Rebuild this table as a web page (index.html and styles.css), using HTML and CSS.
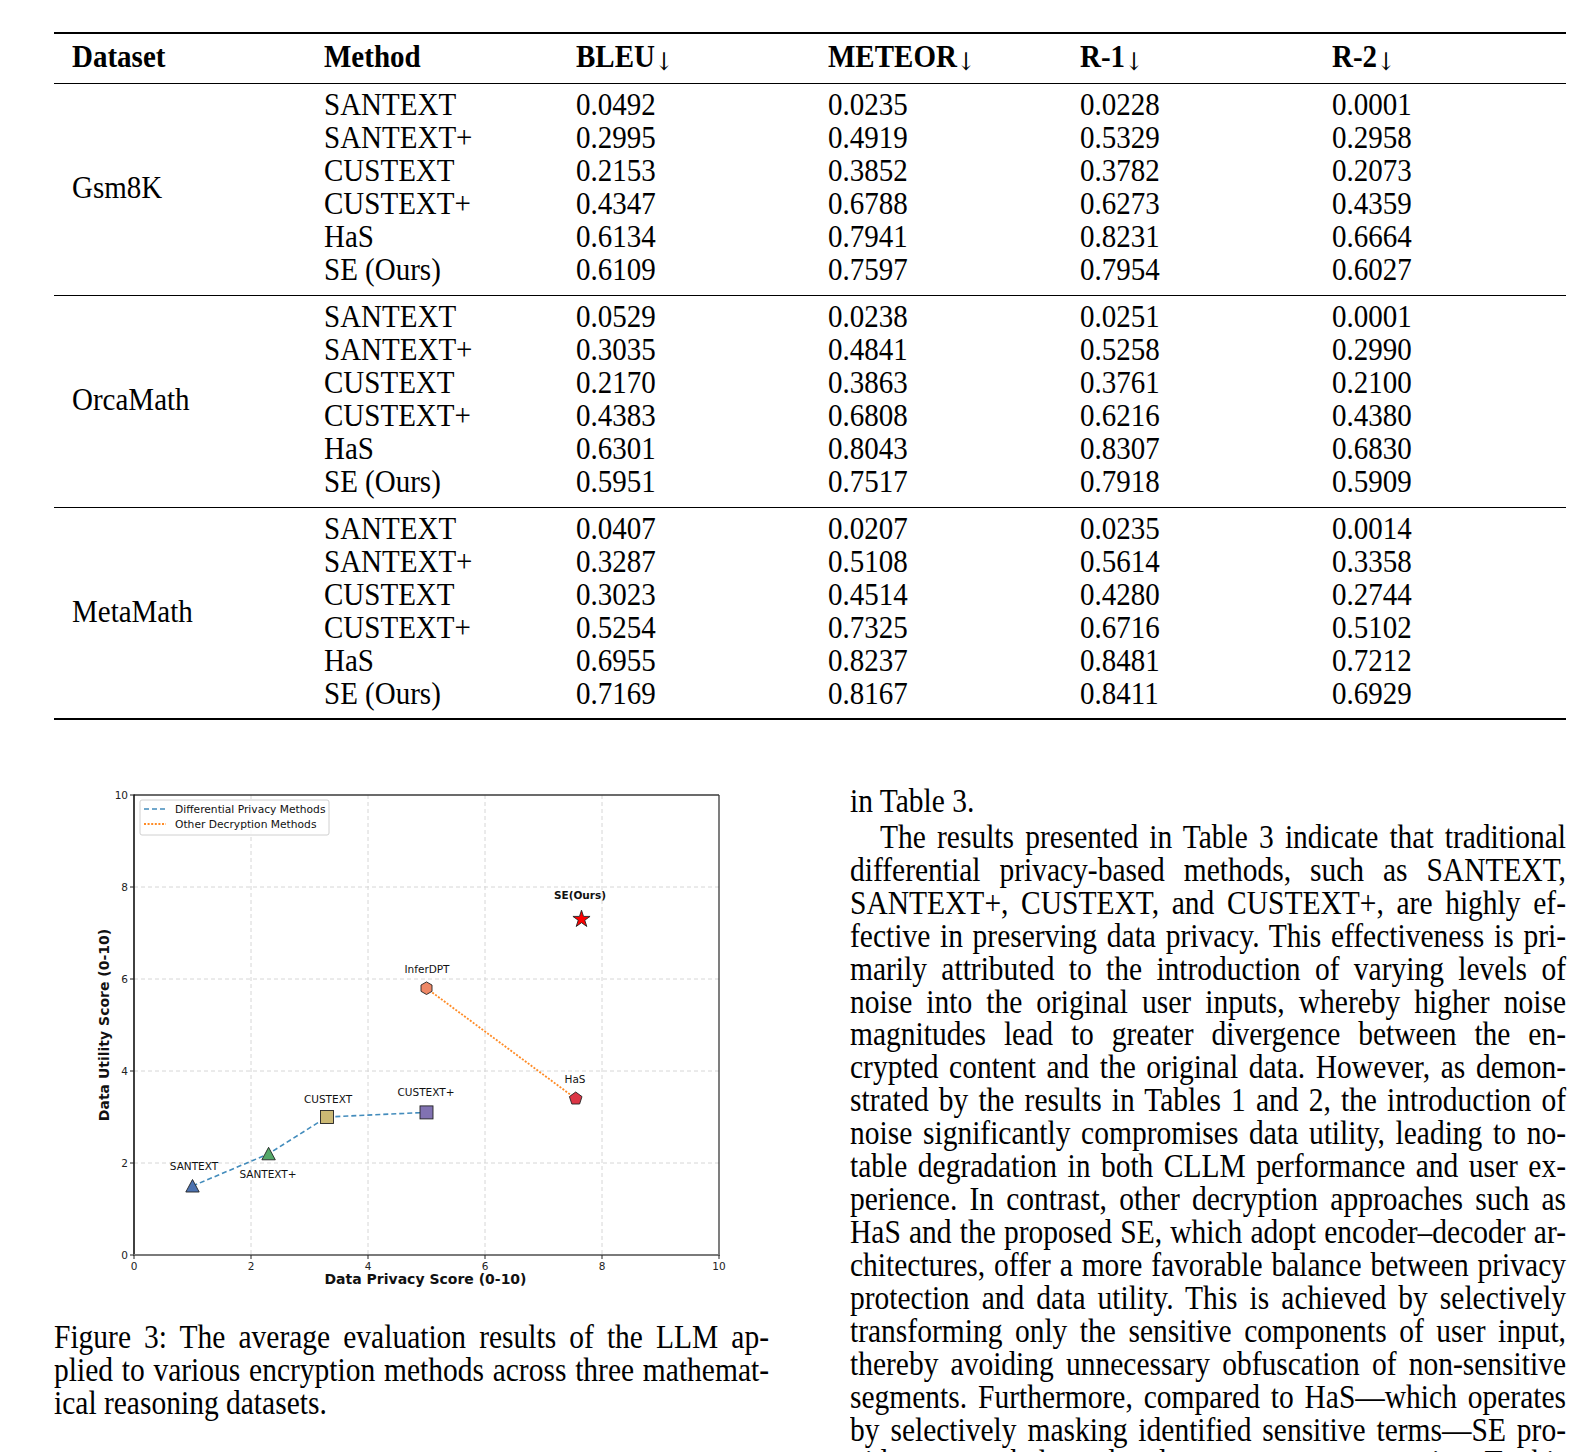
FILE: index.html
```html
<!DOCTYPE html>
<html>
<head>
<meta charset="utf-8">
<link rel="stylesheet" href="styles.css">
</head>
<body>
<div class="page">
  <div class="table">
    <div class="thead">
      <div>Dataset</div><div>Method</div><div>BLEU<span class="arr">↓</span></div><div>METEOR<span class="arr">↓</span></div><div>R-1<span class="arr">↓</span></div><div>R-2<span class="arr">↓</span></div>
    </div>
    <div class="group">
      <div class="ds">Gsm8K</div>
      <div>SANTEXT</div><div>0.0492</div><div>0.0235</div><div>0.0228</div><div>0.0001</div>
      <div>SANTEXT+</div><div>0.2995</div><div>0.4919</div><div>0.5329</div><div>0.2958</div>
      <div>CUSTEXT</div><div>0.2153</div><div>0.3852</div><div>0.3782</div><div>0.2073</div>
      <div>CUSTEXT+</div><div>0.4347</div><div>0.6788</div><div>0.6273</div><div>0.4359</div>
      <div>HaS</div><div>0.6134</div><div>0.7941</div><div>0.8231</div><div>0.6664</div>
      <div>SE (Ours)</div><div>0.6109</div><div>0.7597</div><div>0.7954</div><div>0.6027</div>
    </div>
    <div class="group">
      <div class="ds">OrcaMath</div>
      <div>SANTEXT</div><div>0.0529</div><div>0.0238</div><div>0.0251</div><div>0.0001</div>
      <div>SANTEXT+</div><div>0.3035</div><div>0.4841</div><div>0.5258</div><div>0.2990</div>
      <div>CUSTEXT</div><div>0.2170</div><div>0.3863</div><div>0.3761</div><div>0.2100</div>
      <div>CUSTEXT+</div><div>0.4383</div><div>0.6808</div><div>0.6216</div><div>0.4380</div>
      <div>HaS</div><div>0.6301</div><div>0.8043</div><div>0.8307</div><div>0.6830</div>
      <div>SE (Ours)</div><div>0.5951</div><div>0.7517</div><div>0.7918</div><div>0.5909</div>
    </div>
    <div class="group last">
      <div class="ds">MetaMath</div>
      <div>SANTEXT</div><div>0.0407</div><div>0.0207</div><div>0.0235</div><div>0.0014</div>
      <div>SANTEXT+</div><div>0.3287</div><div>0.5108</div><div>0.5614</div><div>0.3358</div>
      <div>CUSTEXT</div><div>0.3023</div><div>0.4514</div><div>0.4280</div><div>0.2744</div>
      <div>CUSTEXT+</div><div>0.5254</div><div>0.7325</div><div>0.6716</div><div>0.5102</div>
      <div>HaS</div><div>0.6955</div><div>0.8237</div><div>0.8481</div><div>0.7212</div>
      <div>SE (Ours)</div><div>0.7169</div><div>0.8167</div><div>0.8411</div><div>0.6929</div>
    </div>
  </div>

  <div class="cols">
    <div class="left">
      <svg class="chart" width="715" height="520" viewBox="0 0 715 520">
        <g class="grid">
          <line x1="197" y1="13" x2="197" y2="473"/>
          <line x1="314" y1="13" x2="314" y2="473"/>
          <line x1="431" y1="13" x2="431" y2="473"/>
          <line x1="548" y1="13" x2="548" y2="473"/>
          <line x1="80" y1="381" x2="665" y2="381"/>
          <line x1="80" y1="289" x2="665" y2="289"/>
          <line x1="80" y1="197" x2="665" y2="197"/>
          <line x1="80" y1="105" x2="665" y2="105"/>
        </g>
        <line x1="80" y1="13" x2="665" y2="13" class="sp-top"/>
        <line x1="665" y1="13" x2="665" y2="473" class="sp-top"/>
        <line x1="80" y1="12.5" x2="80" y2="474" class="sp-left"/>
        <line x1="79" y1="473" x2="666" y2="473" class="sp-bottom"/>
        <g class="tick">
          <line x1="80" y1="473" x2="80" y2="477"/>
          <line x1="197" y1="473" x2="197" y2="477"/>
          <line x1="314" y1="473" x2="314" y2="477"/>
          <line x1="431" y1="473" x2="431" y2="477"/>
          <line x1="548" y1="473" x2="548" y2="477"/>
          <line x1="665" y1="473" x2="665" y2="477"/>
          <line x1="76" y1="473" x2="80" y2="473"/>
          <line x1="76" y1="381" x2="80" y2="381"/>
          <line x1="76" y1="289" x2="80" y2="289"/>
          <line x1="76" y1="197" x2="80" y2="197"/>
          <line x1="76" y1="105" x2="80" y2="105"/>
          <line x1="76" y1="13" x2="80" y2="13"/>
        </g>
        <g class="ticklab xt">
          <text x="80" y="488">0</text>
          <text x="197" y="488">2</text>
          <text x="314" y="488">4</text>
          <text x="431" y="488">6</text>
          <text x="548" y="488">8</text>
          <text x="665" y="488">10</text>
        </g>
        <g class="ticklab yt">
          <text x="74" y="476.8">0</text>
          <text x="74" y="384.8">2</text>
          <text x="74" y="292.8">4</text>
          <text x="74" y="200.8">6</text>
          <text x="74" y="108.8">8</text>
          <text x="74" y="16.8">10</text>
        </g>
        <text class="axlab" x="371.5" y="502">Data Privacy Score (0-10)</text>
        <text class="axlab" transform="translate(55 243) rotate(-90)" x="0" y="0">Data Utility Score (0-10)</text>

        <polyline class="dp" points="138.5,404 214.6,371.8 273,335 372.5,330.4"/>
        <line class="od" x1="372.5" y1="206.2" x2="521.7" y2="316.6"/>

        <polygon class="mk" fill="#4c72b0" points="138.5,397.5 131.8,410 145.2,410"/>
        <polygon class="mk" fill="#55a868" points="214.6,365.3 207.9,377.8 221.3,377.8"/>
        <rect class="mk" fill="#ccb974" x="266.5" y="328.5" width="13" height="13"/>
        <rect class="mk" fill="#8172b2" x="366" y="323.9" width="13" height="13"/>
        <polygon class="mk" fill="#ee8866" points="372.5,199.9 367,203.05 367,209.35 372.5,212.5 378,209.35 378,203.05"/>
        <polygon class="mk" fill="#dc3545" points="521.7,310 528,314.6 525.6,322 517.8,322 515.4,314.6"/>
        <polygon class="mk" fill="#ff0000" points="527.5,128.2 529.53,134.41 536.06,134.42 530.78,138.27 532.79,144.48 527.5,140.65 522.21,144.48 524.22,138.27 518.94,134.42 525.47,134.41"/>

        <g class="lab">
          <text x="140" y="388">SANTEXT</text>
          <text x="214" y="396">SANTEXT+</text>
          <text x="274" y="321">CUSTEXT</text>
          <text x="372" y="314">CUSTEXT+</text>
          <text x="521" y="301">HaS</text>
          <text x="373" y="191">InferDPT</text>
          <text x="526" y="117" class="bold">SE(Ours)</text>
        </g>

        <rect class="legbox" x="86" y="18" width="189" height="35" rx="2"/>
        <line class="dp" x1="90" y1="27" x2="112" y2="27"/>
        <line class="od" x1="90" y1="42" x2="112" y2="42"/>
        <text class="legtxt" x="121" y="30.5">Differential Privacy Methods</text>
        <text class="legtxt" x="121" y="46">Other Decryption Methods</text>
      </svg>
      <p class="caption">
        <span class="j">Figure 3: The average evaluation results of the LLM ap-</span>
        <span class="j">plied to various encryption methods across three mathemat-</span>
        <span>ical reasoning datasets.</span>
      </p>
    </div>
    <div class="right">
      <p class="para">
        <span class="first">in Table 3.</span>
        <span class="j indent">The results presented in Table 3 indicate that traditional</span>
        <span class="j">differential privacy-based methods, such as SANTEXT,</span>
        <span class="j">SANTEXT+, CUSTEXT, and CUSTEXT+, are highly ef-</span>
        <span class="j">fective in preserving data privacy. This effectiveness is pri-</span>
        <span class="j">marily attributed to the introduction of varying levels of</span>
        <span class="j">noise into the original user inputs, whereby higher noise</span>
        <span class="j">magnitudes lead to greater divergence between the en-</span>
        <span class="j">crypted content and the original data. However, as demon-</span>
        <span class="j">strated by the results in Tables 1 and 2, the introduction of</span>
        <span class="j">noise significantly compromises data utility, leading to no-</span>
        <span class="j">table degradation in both CLLM performance and user ex-</span>
        <span class="j">perience. In contrast, other decryption approaches such as</span>
        <span class="j">HaS and the proposed SE, which adopt encoder–decoder ar-</span>
        <span class="j">chitectures, offer a more favorable balance between privacy</span>
        <span class="j">protection and data utility. This is achieved by selectively</span>
        <span class="j">transforming only the sensitive components of user input,</span>
        <span class="j">thereby avoiding unnecessary obfuscation of non-sensitive</span>
        <span class="j">segments. Furthermore, compared to HaS—which operates</span>
        <span class="j">by selectively masking identified sensitive terms—SE pro-</span>
        <span class="j">vides a more balanced and context-aware protection. To this</span>
      </p>
    </div>
  </div>
</div>
</body>
</html>
```

FILE: styles.css
```css
html, body {
  margin: 0;
  padding: 0;
  background: #ffffff;
}
body {
  color: #000;
  font-family: "Liberation Serif", "Times New Roman", serif;
  height: 1452px;
  overflow: hidden;
}
.page {
  padding: 32px 0 0 54px;
  width: 1512px;
}
.table {
  width: 1512px;
  border-top: 2px solid #000;
  border-bottom: 2px solid #000;
  font-size: 29px;
}
.thead,
.group {
  display: grid;
  grid-template-columns: 252px 252px 252px 252px 252px 1fr;
  padding-left: 18px;
}
.thead > div,
.group > div {
  transform: scaleY(1.12);
}
.thead {
  font-weight: bold;
  line-height: 44px;
  padding-bottom: 2px;
  border-bottom: 1px solid #000;
}
.arr {
  font-weight: normal;
  font-family: "DejaVu Serif", "Liberation Serif", serif;
  font-size: 22px;
  position: relative;
  top: 3px;
}
.group {
  line-height: 33px;
  padding-top: 4px;
  padding-bottom: 9px;
  border-bottom: 1px solid #000;
}
.group.last {
  padding-bottom: 8px;
  border-bottom: none;
}
.ds {
  grid-column: 1;
  grid-row: 1 / span 6;
  align-self: center;
}
.cols {
  display: grid;
  grid-template-columns: 715px 716px;
  column-gap: 81px;
  margin-top: 62px;
}
.chart {
  display: block;
}
.grid line {
  stroke: #d6d6d6;
  stroke-width: 1;
  stroke-dasharray: 4 3;
}
.sp-top {
  stroke: #3a3a3a;
  stroke-width: 1.3;
}
.sp-left {
  stroke: #111;
  stroke-width: 1.6;
}
.sp-bottom {
  stroke: #7a7a7a;
  stroke-width: 2.2;
}
.tick line {
  stroke: #222;
  stroke-width: 1;
}
.ticklab text {
  font-family: "DejaVu Sans", sans-serif;
  font-size: 10.5px;
  fill: #222;
}
.xt text {
  text-anchor: middle;
}
.yt text {
  text-anchor: end;
}
.axlab {
  font-family: "DejaVu Sans", sans-serif;
  font-weight: bold;
  font-size: 14px;
  text-anchor: middle;
  fill: #111;
}
.dp {
  fill: none;
  stroke: #2f7fb5;
  stroke-width: 1.6;
  stroke-dasharray: 5 3;
  opacity: 0.9;
}
.od {
  stroke: #ff7f0e;
  stroke-width: 1.8;
  stroke-dasharray: 2 1.6;
  opacity: 0.9;
}
.mk {
  stroke: #222;
  stroke-width: 0.9;
}
.lab text {
  font-family: "DejaVu Sans", sans-serif;
  font-size: 10.5px;
  text-anchor: middle;
  fill: #111;
}
.lab text.bold {
  font-weight: bold;
}
.legbox {
  fill: #fff;
  fill-opacity: 0.85;
  stroke: #d0d0d0;
  stroke-width: 1;
}
.legtxt {
  font-family: "DejaVu Sans", sans-serif;
  font-size: 10.7px;
  fill: #111;
}
.caption {
  margin: 19px 0 0;
  font-size: 29.5px;
  line-height: 33px;
}
.caption span,
.para span {
  display: block;
  transform: scaleY(1.12);
}
.j {
  text-align: justify;
  text-align-last: justify;
}
.indent {
  text-indent: 30px;
}
.right {
  padding-top: 3px;
}
.para {
  margin: 0;
  font-size: 29.5px;
  line-height: 32.92px;
}
.para .first {
  margin-bottom: 3px;
}
```
